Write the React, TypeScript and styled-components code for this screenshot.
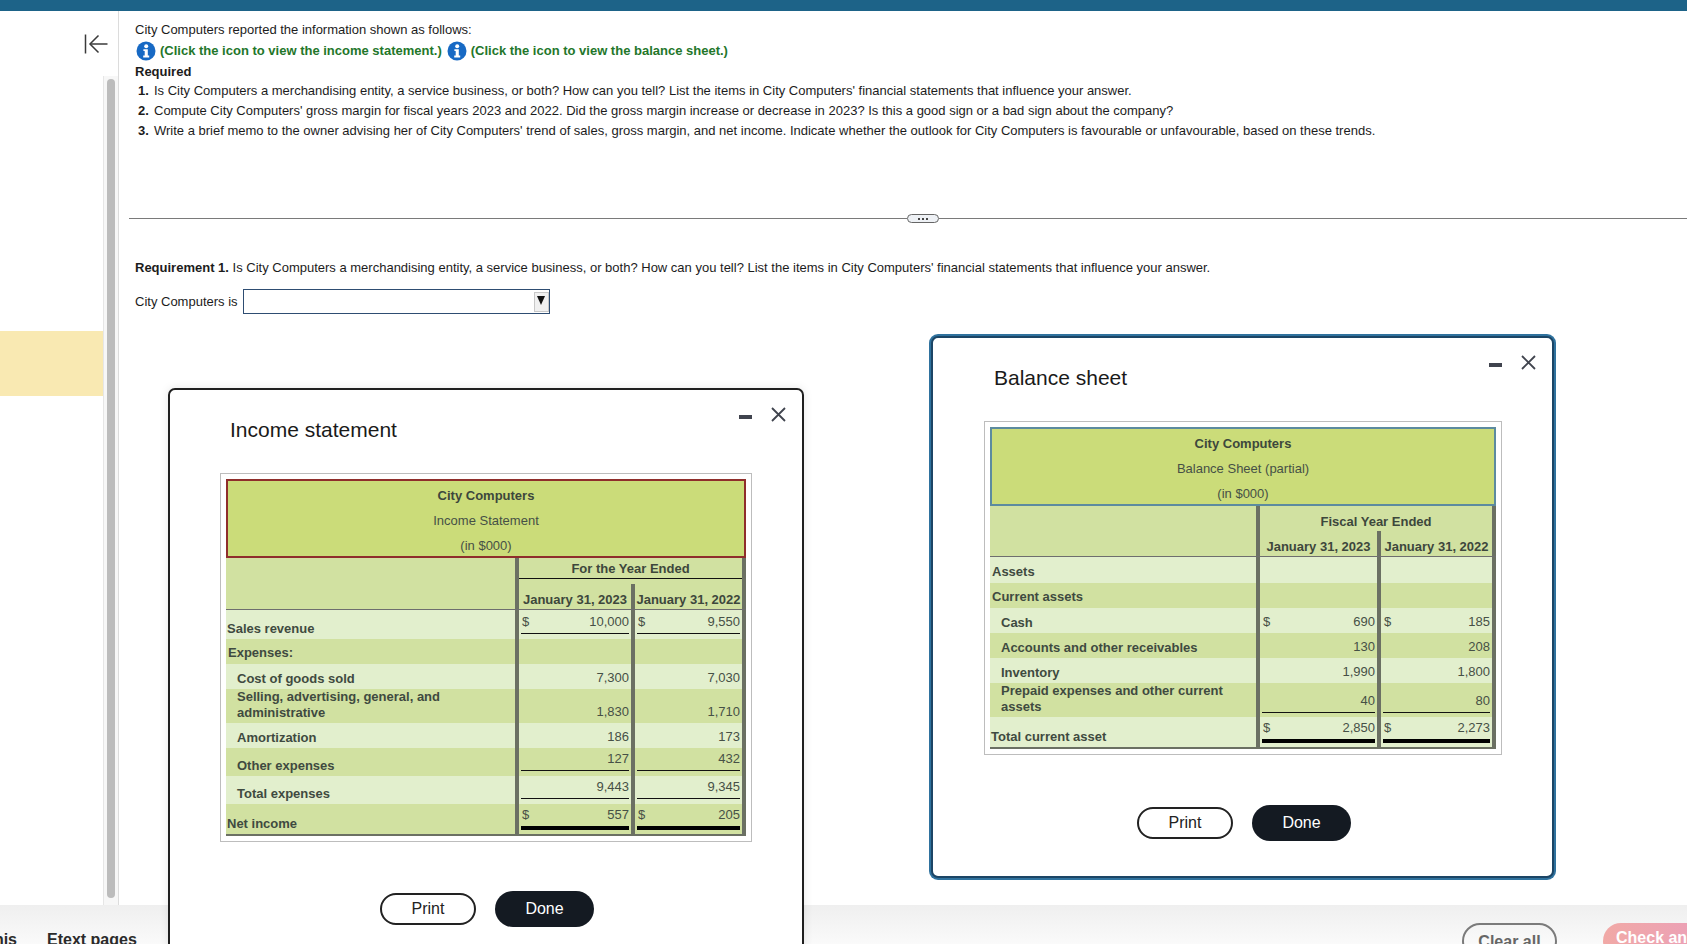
import React from "react";
import styled, { createGlobalStyle } from "styled-components";

const Global = createGlobalStyle`
  html, body { margin: 0; padding: 0; width: 100%; height: 100%; overflow: hidden; background: #fff; }
  body { font-family: "Liberation Sans", Arial, sans-serif; color: #1c1c1c; }
  #root { height: 100%; }
  * { box-sizing: border-box; }
`;

const Page = styled.div`
  position: relative;
  width: 1687px;
  height: 944px;
  overflow: hidden;
  display: flex;
  flex-direction: column;
`;
const TopBar = styled.div`
  flex: 0 0 11px;
  background: #1d6388;
`;
const Middle = styled.div`
  flex: 1;
  display: flex;
  min-height: 0;
`;
const Sidebar = styled.aside`
  flex: 0 0 119px;
  display: flex;
  flex-direction: column;
  border-right: 1px solid #dcdcdc;
`;
const BackRow = styled.div`
  flex: 0 0 65px;
  display: flex;
  justify-content: flex-end;
  padding: 23px 10px 0 0;
  color: #3a3a3a;
`;
const SideBody = styled.div`
  flex: 1;
  display: flex;
  min-height: 0;
`;
const SideList = styled.div`
  flex: 0 0 103px;
  padding-top: 255px;
`;
const Highlight = styled.div`
  height: 65px;
  background: #f9e9b2;
`;
const Track = styled.div`
  flex: 1;
  padding: 3px 3px 7px 3px;
  background: #f7f7f7;
  border-left: 1px solid #e6e6e6;
`;
const Thumb = styled.div`
  height: 100%;
  border-radius: 4px;
  background: #bcbcbc;
`;
const Content = styled.main`
  flex: 1;
  min-width: 0;
  padding: 9px 0 0 16px;
  font-size: 13px;
  line-height: 20px;
`;
const Line = styled.div`
  white-space: nowrap;
`;
const LinkLine = styled.div`
  display: flex;
  align-items: center;
  height: 20px;
  margin: 1px 0 0 1px;
  white-space: nowrap;
`;
const InfoLink = styled.span`
  display: inline-flex;
  align-items: center;
  gap: 4px;
  margin-right: 5px;
  color: #23762a;
  font-weight: 700;
`;
const RequiredHead = styled.div`
  margin-top: 1px;
  height: 19px;
  line-height: 19px;
  font-weight: 700;
`;
const Steps = styled.ol`
  list-style: none;
  margin: 0;
  padding: 0 0 0 3px;
`;
const Step = styled.li`
  display: flex;
  white-space: nowrap;
  height: 20px;
`;
const StepNum = styled.b`
  flex: 0 0 16px;
`;
const Split = styled.div`
  display: flex;
  align-items: center;
  margin: 73px 0 0 -6px;
`;
const SplitLine = styled.div<{ $w?: number }>`
  height: 1px;
  background: #7a7a7a;
  flex: ${(p) => (p.$w ? `0 0 ${p.$w}px` : "1")};
`;
const Pill = styled.div`
  flex: 0 0 32px;
  height: 9px;
  display: flex;
  align-items: center;
  justify-content: center;
  gap: 2px;
  background: #eef1f5;
  border: 1px solid #666;
  border-radius: 5px;
`;
const PillDot = styled.i`
  width: 2px;
  height: 2px;
  background: #444;
`;
const ReqLine = styled(Line)`
  margin-top: 35px;
`;
const AnswerRow = styled.div`
  display: flex;
  align-items: center;
  gap: 5px;
  margin-top: 11px;
  height: 25px;
`;
const SelectBox = styled.div`
  width: 307px;
  height: 25px;
  padding: 2px 0 1px 0;
  display: flex;
  justify-content: flex-end;
  border: 1.5px solid #2e4d72;
  background: #fff;
`;
const SelectArrow = styled.div`
  width: 15px;
  display: flex;
  align-items: center;
  justify-content: center;
  padding-bottom: 3px;
  background: #f0f0f0;
  border: 1px solid #c8c8c8;
  &::after {
    content: "";
    border-left: 4.5px solid transparent;
    border-right: 4.5px solid transparent;
    border-top: 9px solid #111;
  }
`;

const Footer = styled.footer`
  flex: 0 0 39px;
  display: flex;
  overflow: hidden;
  background: linear-gradient(#efefef, #fafafa);
  font-size: 16px;
  line-height: 18px;
  font-weight: 700;
  padding-top: 18px;
`;
const ClipTab = styled.div`
  flex: 0 0 17px;
  display: flex;
  justify-content: flex-end;
  overflow: hidden;
  white-space: nowrap;
  padding-top: 8px;
  color: #2b2b2b;
`;
const Tab = styled.div`
  margin-left: 30px;
  padding-top: 8px;
  color: #2b2b2b;
`;
const FooterActions = styled.div`
  margin-left: auto;
  display: flex;
  gap: 46px;
  flex: 0 0 225px;
  min-width: 0;
`;
const ClearBtn = styled.div`
  flex: 0 0 95px;
  height: 36px;
  text-align: center;
  line-height: 30px;
  padding-top: 2px;
  color: #666;
  border: 2px solid #7b7b7b;
  border-radius: 18px;
`;
const CheckBtn = styled.div`
  flex: 0 0 170px;
  height: 36px;
  padding: 6px 0 0 13px;
  color: #fff;
  white-space: nowrap;
  border-radius: 18px;
  background: linear-gradient(90deg, #f1a9a6, #e79ac4);
`;

const Modal = styled.section<{ $x: number; $y: number; $w: number; $h: number; $focus?: boolean }>`
  position: absolute;
  left: ${(p) => p.$x}px;
  top: ${(p) => p.$y}px;
  width: ${(p) => p.$w}px;
  height: ${(p) => p.$h}px;
  padding: ${(p) => (p.$focus ? "26px 0 0 51px" : "26px 0 0 50px")};
  background: #fff;
  border: 2px solid ${(p) => (p.$focus ? "#1c4565" : "#1f1f1f")};
  border-radius: 7px;
  box-shadow: ${(p) => (p.$focus ? "0 0 0 2px #2f729e" : "0 0 10px rgba(0,0,0,.1)")};
`;
const ModalTools = styled.div`
  position: absolute;
  top: 17px;
  right: 16px;
  display: flex;
  align-items: center;
  gap: 19px;
  color: #40444e;
`;
const MinBar = styled.div`
  width: 13px;
  height: 4px;
  margin-top: 4px;
  background: #40444e;
`;
const Title = styled.h2<{ $gap: number }>`
  margin: 0 0 ${(p) => p.$gap}px 10px;
  font-size: 21px;
  line-height: 28px;
  font-weight: 400;
  color: #1a1a1a;
`;
const Frame = styled.div<{ $w: number }>`
  width: ${(p) => p.$w}px;
  padding: 5px;
  border: 1px solid #bdbdbd;
  font-size: 13px;
  line-height: 16px;
  color: #465046;
`;
const Band = styled.div<{ $color: string; $h: number; $pt: number }>`
  height: ${(p) => p.$h}px;
  padding-top: ${(p) => p.$pt}px;
  text-align: center;
  line-height: 25px;
  background: #cbdc79;
  border: 2px solid ${(p) => p.$color};
`;
const BandTitle = styled.div`
  font-weight: 700;
  color: #3d473c;
`;
const Head = styled.div<{ $cols: string; $top: number; $h: number }>`
  display: grid;
  grid-template-columns: ${(p) => p.$cols};
  grid-template-rows: ${(p) => p.$top}px 1fr;
  height: ${(p) => p.$h}px;
  background: #d1e1a1;
  border-bottom: 1px solid #6e6e6e;
  font-weight: 700;
  color: #3d473c;
`;
const HeadBlank = styled.div`
  grid-row: 1 / 3;
`;
const HeadSpan = styled.div<{ $pt: number }>`
  grid-column: 2 / 4;
  padding-top: ${(p) => p.$pt}px;
  text-align: center;
  border-left: 4px solid #6b7063;
  border-right: 4px solid #6b7063;
`;
const HeadSpanText = styled.div<{ $rule?: boolean }>`
  height: 100%;
  border-bottom: ${(p) => (p.$rule ? "1.5px solid #111" : "0")};
`;
const HeadDate = styled.div`
  display: flex;
  align-items: flex-end;
  justify-content: center;
  padding-bottom: 1px;
  white-space: nowrap;
  border-left: 4px solid #6b7063;
`;
const HeadDateOuter = styled.div`
  display: flex;
  flex-direction: column;
  border-right: 4px solid #6b7063;
`;
const HeadDateInner = styled(HeadDate)<{ $gapTop: number }>`
  flex: 1;
  margin-top: ${(p) => p.$gapTop}px;
`;
const Row = styled.div<{ $cols: string; $h: number; $dark: boolean }>`
  display: grid;
  grid-template-columns: ${(p) => p.$cols};
  height: ${(p) => p.$h}px;
  background: ${(p) => (p.$dark ? "#d1e1a1" : "#e2efcd")};
`;
const LabelCell = styled.div<{ $top: number; $indent: number }>`
  padding: ${(p) => p.$top}px 0 0 ${(p) => p.$indent}px;
  font-weight: 700;
  color: #3f4a40;
`;
const ValueCell = styled.div<{ $last?: boolean }>`
  border-left: 4px solid #6b7063;
  border-right: ${(p) => (p.$last ? "4px solid #6b7063" : "0")};
  padding: 0 2px;
`;
const Amount = styled.div<{ $top: number; $rule?: "single" | "double" }>`
  display: flex;
  justify-content: space-between;
  padding: ${(p) => p.$top}px 0 3px 1px;
  border-bottom: ${(p) => (p.$rule === "double" ? "4px solid #000" : p.$rule === "single" ? "1.5px solid #111" : "0")};
`;
const Base = styled.div`
  height: 2px;
  background: #6b7063;
`;
const Buttons = styled.div<{ $mt: number; $w: number }>`
  display: flex;
  align-items: center;
  justify-content: center;
  gap: 19px;
  width: ${(p) => p.$w}px;
  margin-top: ${(p) => p.$mt}px;
  padding-left: 2px;
`;
const PrintBtn = styled.button`
  width: 96px;
  height: 32px;
  padding: 0;
  font: 400 16px "Liberation Sans", Arial, sans-serif;
  color: #222;
  background: #fff;
  border: 2px solid #222;
  border-radius: 16px;
`;
const DoneBtn = styled.button`
  width: 99px;
  height: 36px;
  padding: 0;
  font: 400 16px "Liberation Sans", Arial, sans-serif;
  color: #fff;
  background: #141a22;
  border: 0;
  border-radius: 18px;
`;

type Val = { d?: boolean; v?: string; rule?: "single" | "double" };
type R = { label: string; indent: number; h: number; lt: number; vt?: number; a?: Val; b?: Val };

const incomeCols = "289px 116px 115px";
const balanceCols = "266px 121px 119px";

const incomeRows: R[] = [
  { label: "Sales revenue", indent: 1, h: 29, lt: 11, vt: 4, a: { d: true, v: "10,000", rule: "single" }, b: { d: true, v: "9,550", rule: "single" } },
  { label: "Expenses:", indent: 2, h: 25, lt: 6 },
  { label: "Cost of goods sold", indent: 11, h: 25, lt: 7, vt: 6, a: { v: "7,300" }, b: { v: "7,030" } },
  { label: "Selling, advertising, general, and administrative", indent: 11, h: 34, lt: 0, vt: 15, a: { v: "1,830" }, b: { v: "1,710" } },
  { label: "Amortization", indent: 11, h: 25, lt: 7, vt: 6, a: { v: "186" }, b: { v: "173" } },
  { label: "Other expenses", indent: 11, h: 28, lt: 10, vt: 3, a: { v: "127", rule: "single" }, b: { v: "432", rule: "single" } },
  { label: "Total expenses", indent: 11, h: 28, lt: 10, vt: 3, a: { v: "9,443", rule: "single" }, b: { v: "9,345", rule: "single" } },
  { label: "Net income", indent: 1, h: 30, lt: 12, vt: 3, a: { d: true, v: "557", rule: "double" }, b: { d: true, v: "205", rule: "double" } },
];

const balanceRows: R[] = [
  { label: "Assets", indent: 2, h: 26, lt: 7 },
  { label: "Current assets", indent: 2, h: 25, lt: 6 },
  { label: "Cash", indent: 11, h: 25, lt: 7, vt: 6, a: { d: true, v: "690" }, b: { d: true, v: "185" } },
  { label: "Accounts and other receivables", indent: 11, h: 25, lt: 7, vt: 6, a: { v: "130" }, b: { v: "208" } },
  { label: "Inventory", indent: 11, h: 25, lt: 7, vt: 6, a: { v: "1,990" }, b: { v: "1,800" } },
  { label: "Prepaid expenses and other current assets", indent: 11, h: 34, lt: 0, vt: 10, a: { v: "40", rule: "single" }, b: { v: "80", rule: "single" } },
  { label: "Total current asset", indent: 1, h: 30, lt: 12, vt: 3, a: { d: true, v: "2,850", rule: "double" }, b: { d: true, v: "2,273", rule: "double" } },
];

const InfoIcon = () => (
  <svg width="20" height="20" viewBox="0 0 20 20" aria-hidden="true">
    <circle cx="10" cy="10" r="9.5" fill="#1769c4" />
    <circle cx="10.2" cy="5.2" r="2" fill="#fff" />
    <path d="M7.4 8.2h4.4v6.4h1.4v1.8H7.2v-1.8h1.5V10H7.4z" fill="#fff" />
  </svg>
);
const BackIcon = () => (
  <svg width="24" height="20" viewBox="0 0 24 20" fill="none" stroke="currentColor" strokeWidth="1.5" aria-hidden="true">
    <path d="M1.5 0.5v19" />
    <path d="M23.5 10H6.5" />
    <path d="M14.5 1.5L6 10l8.5 8.5" />
  </svg>
);
const CloseIcon = () => (
  <svg width="15" height="15" viewBox="0 0 15 15" fill="none" stroke="currentColor" strokeWidth="1.8" aria-hidden="true">
    <path d="M1 1l13 13M14 1L1 14" />
  </svg>
);

const Money = ({ val, top }: { val?: Val; top?: number }) =>
  val ? (
    <Amount $top={top ?? 0} $rule={val.rule}>
      <span>{val.d ? "$" : ""}</span>
      <span>{val.v}</span>
    </Amount>
  ) : null;

const Sheet = ({
  cols,
  rows,
  subtitle,
  color,
  bandH,
  bandPt,
  span,
  spanPt,
  rule,
  headTop,
  headH,
  gapTop,
  width,
}: {
  cols: string;
  rows: R[];
  subtitle: string;
  color: string;
  bandH: number;
  bandPt: number;
  span: string;
  spanPt: number;
  rule?: boolean;
  headTop: number;
  headH: number;
  gapTop: number;
  width: number;
}) => (
  <Frame $w={width}>
    <Band $color={color} $h={bandH} $pt={bandPt}>
      <BandTitle>City Computers</BandTitle>
      <div>{subtitle}</div>
      <div>(in $000)</div>
    </Band>
    <Head $cols={cols} $top={headTop} $h={headH}>
      <HeadBlank />
      <HeadSpan $pt={spanPt}>
        <HeadSpanText $rule={rule}>{span}</HeadSpanText>
      </HeadSpan>
      <HeadDate>January 31, 2023</HeadDate>
      <HeadDateOuter>
        <HeadDateInner $gapTop={gapTop}>January 31, 2022</HeadDateInner>
      </HeadDateOuter>
    </Head>
    {rows.map((r, i) => (
      <Row key={r.label} $cols={cols} $h={r.h} $dark={i % 2 === 1}>
        <LabelCell $top={r.lt} $indent={r.indent}>
          {r.label}
        </LabelCell>
        <ValueCell>
          <Money val={r.a} top={r.vt} />
        </ValueCell>
        <ValueCell $last>
          <Money val={r.b} top={r.vt} />
        </ValueCell>
      </Row>
    ))}
    <Base />
  </Frame>
);

export default function App() {
  return (
    <Page>
      <Global />
      <TopBar />
      <Middle>
        <Sidebar>
          <BackRow>
            <BackIcon />
          </BackRow>
          <SideBody>
            <SideList>
              <Highlight />
            </SideList>
            <Track>
              <Thumb />
            </Track>
          </SideBody>
        </Sidebar>
        <Content>
          <Line>City Computers reported the information shown as follows:</Line>
          <LinkLine>
            <InfoLink>
              <InfoIcon />
              (Click the icon to view the income statement.)
            </InfoLink>
            <InfoLink>
              <InfoIcon />
              (Click the icon to view the balance sheet.)
            </InfoLink>
          </LinkLine>
          <RequiredHead>Required</RequiredHead>
          <Steps>
            <Step>
              <StepNum>1.</StepNum>
              <span>
                Is City Computers a merchandising entity, a service business, or both? How can you tell? List the items in City Computers' financial statements that influence your answer.
              </span>
            </Step>
            <Step>
              <StepNum>2.</StepNum>
              <span>
                Compute City Computers' gross margin for fiscal years 2023 and 2022. Did the gross margin increase or decrease in 2023? Is this a good sign or a bad sign about the company?
              </span>
            </Step>
            <Step>
              <StepNum>3.</StepNum>
              <span>
                Write a brief memo to the owner advising her of City Computers' trend of sales, gross margin, and net income. Indicate whether the outlook for City Computers is favourable or unfavourable, based on these trends.
              </span>
            </Step>
          </Steps>
          <Split>
            <SplitLine $w={778} />
            <Pill>
              <PillDot />
              <PillDot />
              <PillDot />
            </Pill>
            <SplitLine />
          </Split>
          <ReqLine>
            <b>Requirement 1.</b> Is City Computers a merchandising entity, a service business, or both? How can you tell? List the items in City Computers' financial statements that influence your answer.
          </ReqLine>
          <AnswerRow>
            <span>City Computers is</span>
            <SelectBox>
              <SelectArrow />
            </SelectBox>
          </AnswerRow>
        </Content>
      </Middle>
      <Footer>
        <ClipTab>Help me solve this</ClipTab>
        <Tab>Etext pages</Tab>
        <FooterActions>
          <ClearBtn>Clear all</ClearBtn>
          <CheckBtn>Check answer</CheckBtn>
        </FooterActions>
      </Footer>

      <Modal $x={168} $y={388} $w={636} $h={640}>
        <ModalTools>
          <MinBar />
          <CloseIcon />
        </ModalTools>
        <Title $gap={29}>Income statement</Title>
        <Sheet
          cols={incomeCols}
          rows={incomeRows}
          subtitle="Income Statement"
          color="#8f2e2b"
          bandH={79}
          bandPt={2}
          span="For the Year Ended"
          spanPt={3}
          rule
          headTop={21}
          headH={52}
          gapTop={5}
          width={532}
        />
        <Buttons $mt={49} $w={532}>
          <PrintBtn>Print</PrintBtn>
          <DoneBtn>Done</DoneBtn>
        </Buttons>
      </Modal>

      <Modal $x={931} $y={336} $w={623} $h={542} $focus>
        <ModalTools>
          <MinBar />
          <CloseIcon />
        </ModalTools>
        <Title $gap={29}>Balance sheet</Title>
        <Sheet
          cols={balanceCols}
          rows={balanceRows}
          subtitle="Balance Sheet (partial)"
          color="#5c8b9f"
          bandH={79}
          bandPt={2}
          span="Fiscal Year Ended"
          spanPt={8}
          headTop={20}
          headH={51}
          gapTop={5}
          width={518}
        />
        <Buttons $mt={50} $w={518}>
          <PrintBtn>Print</PrintBtn>
          <DoneBtn>Done</DoneBtn>
        </Buttons>
      </Modal>
    </Page>
  );
}
